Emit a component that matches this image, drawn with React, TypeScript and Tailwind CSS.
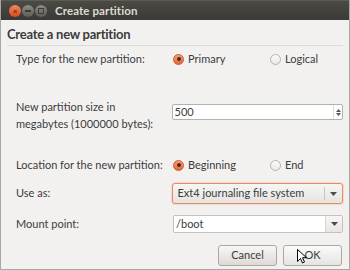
import React from "react";

const Radio = ({ checked, label }: { checked?: boolean; label: string }) => (
  <div className="flex items-center gap-[4px]">
    {checked ? (
      <span className="w-[11px] h-[11px] rounded-full border border-[#c9592c] bg-gradient-to-b from-[#f5a07a] to-[#e0693a] flex items-center justify-center">
        <span className="w-[4px] h-[4px] rounded-full bg-[#4a2a1c]" />
      </span>
    ) : (
      <span className="w-[11px] h-[11px] rounded-full border border-[#b6b3ae] bg-gradient-to-b from-[#fbfbfa] to-[#e9e7e4]" />
    )}
    <span>{label}</span>
  </div>
);

const Arrow = () => (
  <svg width="7" height="4" viewBox="0 0 7 4">
    <path d="M0 0h7L3.5 4z" fill="#4c4c4c" />
  </svg>
);

export default function App() {
  return (
    <div
      className="relative w-[350px] h-[270px] bg-[#f2f1f0] border-x border-b border-[#a9a7a3] text-[#3c3c3c] text-[11px] overflow-hidden"
      style={{ fontFamily: 'Lato, "Open Sans", sans-serif' }}
    >
      {/* title bar */}
      <div className="h-[20px] -mx-px bg-gradient-to-b from-[#4b4a45] to-[#3a3935] border-t border-[#5c5b56] flex items-center">
        <div className="flex items-center gap-[1px] pl-[9px]">
          <span className="w-[12px] h-[12px] rounded-full bg-gradient-to-b from-[#f3875a] to-[#d9481b] flex items-center justify-center text-[#6b2a12] text-[8px] font-bold leading-none">
            ×
          </span>
          <span className="w-[12px] h-[12px] rounded-full bg-gradient-to-b from-[#8c8b86] to-[#5d5c57] flex items-center justify-center">
            <span className="w-[6px] h-[2px] bg-[#3c3b37]" />
          </span>
          <span className="w-[12px] h-[12px] rounded-full bg-gradient-to-b from-[#8c8b86] to-[#5d5c57] flex items-center justify-center">
            <span className="w-[6px] h-[6px] border border-[#3c3b37]" />
          </span>
        </div>
        <span className="ml-[8px] text-[#dfdbd2] text-[11.5px] font-bold tracking-[0.1px]">Create partition</span>
      </div>

      {/* heading */}
      <div className="px-[6px] pt-[6px]">
        <div className="text-[13px] font-bold leading-[16px] tracking-[-0.25px] text-[#3c3c3c]">Create a new partition</div>
        <div className="mt-[3px] h-px bg-[#dddbd8]" />
      </div>

      <div className="flex flex-col pl-[15px] pr-[6px]">
        <div className="mt-[4px] h-[18px] flex items-center">
          <div className="w-[157px]">Type for the new partition:</div>
          <div className="flex">
            <div className="w-[97px]"><Radio checked label="Primary" /></div>
            <Radio label="Logical" />
          </div>
        </div>

        <div className="mt-[30px] h-[35px] flex items-start">
          <div className="w-[156px] leading-[17px]">
            New partition size in
            <br />
            megabytes (1000000 bytes):
          </div>
          <div className="mt-[6px] w-[172px] h-[16px] bg-white border border-[#b5b2ad] rounded-[2px] flex items-center">
            <span className="flex-1 pl-[2px]">500</span>
            <div className="w-[9px] h-full flex flex-col items-center justify-center gap-[1px] border-l border-[#e0deda]">
              <svg width="5" height="3" viewBox="0 0 5 3"><path d="M0 3h5L2.5 0z" fill="#555" /></svg>
              <svg width="5" height="3" viewBox="0 0 5 3"><path d="M0 0h5L2.5 3z" fill="#555" /></svg>
            </div>
          </div>
        </div>

        <div className="mt-[23px] h-[18px] flex items-center">
          <div className="w-[157px]">Location for the new partition:</div>
          <div className="flex">
            <div className="w-[97px]"><Radio checked label="Beginning" /></div>
            <Radio label="End" />
          </div>
        </div>

        <div className="mt-[9px] h-[21px] flex items-center">
          <div className="w-[156px]">Use as:</div>
          <div className="w-[172px] h-full rounded-[3px] border border-[#e88a66] bg-gradient-to-b from-[#f7f6f5] to-[#e6e4e1] flex items-center shadow-[0_0_0_1px_rgba(240,150,110,0.25)]">
            <span className="flex-1 pl-[5px]">Ext4 journaling file system</span>
            <span className="w-px h-[13px] bg-[#c8c5c0]" />
            <span className="w-[17px] flex justify-center"><Arrow /></span>
          </div>
        </div>

        <div className="mt-[11px] h-[18px] flex items-center">
          <div className="w-[157px]">Mount point:</div>
          <div className="w-[170px] h-full rounded-[2px] border border-[#c4c1bc] bg-white flex items-center">
            <span className="flex-1 pl-[2px]">/boot</span>
            <span className="w-[17px] h-full flex items-center justify-center border-l border-[#d8d6d2] bg-gradient-to-b from-[#f7f6f5] to-[#e8e6e3]">
              <Arrow />
            </span>
          </div>
        </div>

        <div className="mt-[12px] flex justify-end gap-[6px] pr-[1px]">
          <button className="w-[59px] h-[21px] rounded-[3px] border border-[#aba8a3] bg-gradient-to-b from-[#f8f7f6] to-[#dddad6] text-[#3c3c3c]">
            Cancel
          </button>
          <button className="w-[59px] h-[21px] rounded-[3px] border border-[#aba8a3] bg-gradient-to-b from-[#fbfbfa] to-[#e6e4e1] text-[#3c3c3c]">
            OK
          </button>
        </div>
      </div>

      {/* mouse pointer */}
      <svg className="absolute left-[296px] top-[249px]" width="10" height="15" viewBox="0 0 10 15">
        <path d="M0.5 0.5v12l3-3 2 4.5 2-1-2-4.3h4z" fill="#fff" stroke="#000" strokeWidth="1" strokeLinejoin="round" />
      </svg>
    </div>
  );
}
